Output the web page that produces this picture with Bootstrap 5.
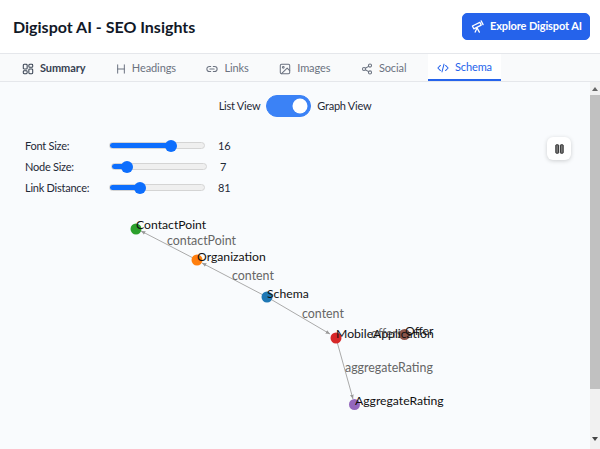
<!doctype html>
<html lang="en"><head><meta charset="utf-8">
<title>Digispot AI - SEO Insights</title>
<link href="https://cdn.jsdelivr.net/npm/bootstrap@5.3.0/dist/css/bootstrap.min.css" rel="stylesheet">
<style>
html,body{height:100%;overflow:hidden}
body{font-family:Lato,sans-serif;color:#111827;background:#fff;display:flex;flex-direction:column}
.top-head{height:54px;padding:0 10px 0 13px;border-bottom:1px solid #e5e7eb;flex:none}
.top-title{font-size:16px;font-weight:700;margin:0;color:#111827}
.cta{background:#2563eb;border:1px solid #2563eb;color:#fff;font-size:11px;letter-spacing:-.12px;font-weight:700;width:128px;height:27px;padding:0 0 0 8px;border-radius:5px;gap:6px;margin-top:-1px;white-space:nowrap}
.tabbar{height:28px;background:#f9fafb;border-bottom:1px solid #e5e7eb;padding-left:13px;flex:none;gap:12.5px}
.tabbar .tab-link{display:flex;align-items:center;gap:6px;height:27px;padding:2px 9px 0;font-size:11px;letter-spacing:-.1px;color:#6b7280;text-decoration:none}
.tabbar .tab-link.first{color:#374151;font-weight:700}
.tabbar .tab-link.active{color:#2563eb;background:#fff;border-bottom:2px solid #2563eb}
.tab-ico{width:12px;height:12px;flex:none;fill:none;stroke:currentColor;stroke-width:1.2;stroke-linecap:round;stroke-linejoin:round}
.tab-ico.thin{width:10px}
.main-area{flex:1;min-height:0;position:relative}
.pane{flex:1;background:#f9fbfd;position:relative;min-width:0}
.view-row{height:35px;padding-top:13px;gap:6px;font-size:11px;letter-spacing:-.25px;color:#1f2937}
.view-row .form-check{margin:0;padding:0;min-height:0}
.view-row .form-check-input{width:45px;height:22px;margin:0;background-color:#3b82f6;border-color:#3b82f6}
.ctl-list{padding:20px 0 0 25px;gap:4px}
.ctl-row{height:17px;font-size:11px;letter-spacing:-.25px;color:#1f2937}
.ctl-name{width:84px;padding-top:1px}
.ctl-val{margin-left:13px;width:20px;padding-top:1px}
.ctl-row .form-range{width:96px;height:12px;padding:0;display:block}
.ctl-row .form-range::-webkit-slider-runnable-track{height:7px;background:linear-gradient(to right,#0d6efd var(--fill),#efefef var(--fill));border:1px solid #d4d4d4;border-radius:4px}
.ctl-row .form-range::-webkit-slider-thumb{width:12px;height:12px;margin-top:-3.5px;background:#0d6efd;border:0}
.shift{margin-left:2px}
.pause-btn{position:absolute;top:55px;right:19px;width:24px;height:23px;background:#fff;border:0;border-radius:6px;box-shadow:0 1px 4px rgba(0,0,0,.18);padding:0}
.graph{display:block;position:absolute;left:0;top:0;width:590px;height:367px;font-family:Lato,sans-serif}
.glabel{font-size:12.2px;fill:#111}
.elabel{font-size:12.4px;fill:#666}
.scroll-rail{width:10px;flex:none;background:#f1f1f1}
.scroll-btn{height:13px;flex:none}
.scroll-thumb{height:294px;background:#c1c1c1;flex:none}
.scroll-end{margin-bottom:4px}
</style></head>
<body>
<header class="top-head d-flex align-items-center justify-content-between">
<h1 class="top-title">Digispot AI - SEO Insights</h1>
<button class="btn cta d-flex align-items-center" type="button">
<svg width="13" height="13" viewBox="0 0 14 14" fill="none" stroke="#fff" stroke-width="1.4" stroke-linecap="round" stroke-linejoin="round"><path d="M1.5 6.500l8-4 1.500 3-8 4zM11 1l2 4M6.500 8.500L4.500 13M6.500 8.500L9 13"/></svg>
Explore Digispot AI</button>
</header>
<nav class="tabbar d-flex">
<a class="tab-link first" href="#"><svg class="tab-ico" viewBox="0 0 14 14"><rect x="1.500" y="1.500" width="4.500" height="5.500" rx="1"/><rect x="8" y="1.500" width="4.500" height="3.500" rx="1"/><rect x="8" y="7" width="4.500" height="5.500" rx="1"/><rect x="1.500" y="9" width="4.500" height="3.500" rx="1"/></svg>Summary</a>
<a class="tab-link" href="#"><svg class="tab-ico thin" viewBox="1 0 12 14"><path d="M3 2v10M11 2v10M3 7h8"/></svg>Headings</a>
<a class="tab-link" href="#"><svg class="tab-ico" viewBox="0 0 14 14"><path d="M5.500 4H4a3 3 0 0 0 0 6h1.500M8.500 4H10a3 3 0 0 1 0 6H8.500M4.500 7h5"/></svg>Links</a>
<a class="tab-link" href="#"><svg class="tab-ico" viewBox="0 0 14 14"><rect x="1.500" y="1.500" width="11" height="11" rx="1.500"/><circle cx="5" cy="5" r="1"/><path d="M12.500 9L9.500 6 3 12.500"/></svg>Images</a>
<a class="tab-link" href="#"><svg class="tab-ico" viewBox="0 0 14 14"><circle cx="10.500" cy="3" r="1.800"/><circle cx="3.500" cy="7" r="1.800"/><circle cx="10.500" cy="11" r="1.800"/><path d="M5.100 6.100l3.800-2.200M5.100 7.900l3.800 2.200"/></svg>Social</a>
<a class="tab-link active" href="#"><svg class="tab-ico" viewBox="0 0 14 14"><path d="M4 4L1 7l3 3M10 4l3 3-3 3M8.200 2.500L5.800 11.500"/></svg>Schema</a>
</nav>
<div class="main-area d-flex">
<section class="pane">
<svg class="graph" viewBox="0 82 590 367">
<defs><marker id="arr" viewBox="0 0 8 8" refX="7" refY="4" markerWidth="5" markerHeight="5" orient="auto"><path d="M0 1L7 4L0 7z" fill="#999"/></marker></defs>
<g stroke="#aaa" stroke-width="1">
<line x1="267" y1="297" x2="202" y2="263" marker-end="url(#arr)"/>
<line x1="197" y1="260" x2="141" y2="231" marker-end="url(#arr)"/>
<line x1="267" y1="297" x2="330" y2="334" marker-end="url(#arr)"/>
<line x1="336" y1="338" x2="353" y2="399" marker-end="url(#arr)"/>
</g>
<g class="elabel">
<text x="167" y="245">contactPoint</text>
<text x="232" y="280">content</text>
<text x="302" y="318">content</text>
<text x="345" y="372">aggregateRating</text>
<text x="371" y="338">offers</text>
</g>
<circle cx="136" cy="229" r="5.500" fill="#2ca02c"/>
<circle cx="197" cy="260" r="5.500" fill="#ff7f0e"/>
<circle cx="267" cy="297" r="5.500" fill="#1f77b4"/>
<circle cx="336" cy="338" r="5.500" fill="#d62728"/>
<circle cx="404.500" cy="334.500" r="5.500" fill="#8c564b"/>
<circle cx="354.500" cy="404.500" r="5.500" fill="#9467bd"/>
<g class="glabel">
<text x="136" y="229">ContactPoint</text>
<text x="197" y="261">Organization</text>
<text x="267" y="298">Schema</text>
<text x="336" y="338">MobileApplication</text>
<text x="405" y="335">Offer</text>
<text x="355" y="405">AggregateRating</text>
</g>
</svg>
<button class="pause-btn d-flex align-items-center justify-content-center" type="button" aria-label="Pause">
<svg width="9" height="10" viewBox="0 0 9 10" fill="#777" stroke="#333" stroke-width="1"><rect x=".8" y=".8" width="2.800" height="8.400" rx=".5"/><rect x="5.400" y=".8" width="2.800" height="8.400" rx=".5"/></svg>
</button>
<div class="view-row d-flex align-items-center justify-content-center position-relative">
<span>List View</span>
<div class="form-check form-switch"><input class="form-check-input" type="checkbox" role="switch" checked aria-label="Graph view"></div>
<span>Graph View</span>
</div>
<div class="ctl-list d-flex flex-column position-relative">
<div class="ctl-row d-flex align-items-center"><span class="ctl-name">Font Size:</span><input class="form-range" style="--fill:65%" type="range" min="0" max="100" step="any" value="66.700" aria-label="Font size"><span class="ctl-val">16</span></div>
<div class="ctl-row d-flex align-items-center"><span class="ctl-name">Node Size:</span><input class="form-range shift" style="--fill:16%" type="range" min="0" max="100" step="any" value="10.700" aria-label="Node size"><span class="ctl-val">7</span></div>
<div class="ctl-row d-flex align-items-center"><span class="ctl-name">Link Distance:</span><input class="form-range" style="--fill:31%" type="range" min="0" max="100" step="any" value="29.800" aria-label="Link distance"><span class="ctl-val">81</span></div>
</div>
</section>
<aside class="scroll-rail d-flex flex-column">
<div class="scroll-btn d-flex align-items-center justify-content-center"><svg width="6" height="4" viewBox="0 0 6 4"><path d="M3 0l3 4H0z" fill="#666"/></svg></div>
<div class="scroll-thumb"></div>
<div class="flex-grow-1"></div>
<div class="scroll-btn scroll-end d-flex align-items-center justify-content-center"><svg width="6" height="4" viewBox="0 0 6 4"><path d="M3 4l3-4H0z" fill="#444"/></svg></div>
</aside>
</div>
</body></html>
